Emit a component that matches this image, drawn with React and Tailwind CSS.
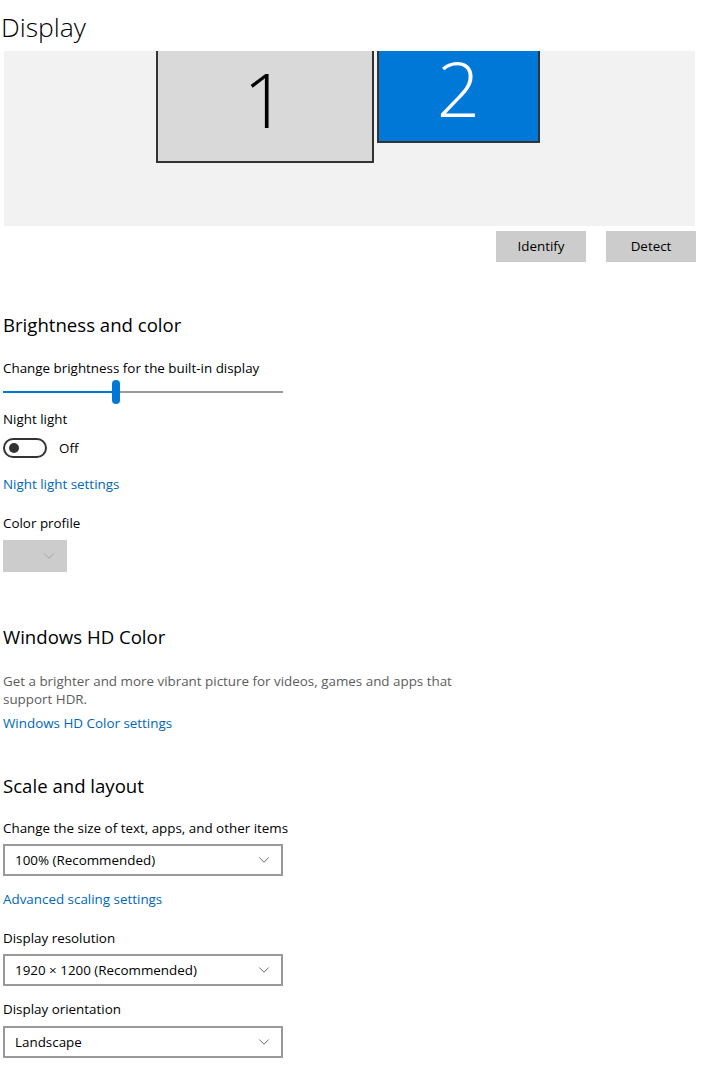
import { ChevronDown } from 'lucide-react';

const font = { fontFamily: '"Open Sans", "Noto Sans", sans-serif' };

const Link = ({ children }) => (
  <a className="block text-[13.4px] text-[#0067b8] leading-5 cursor-pointer">{children}</a>
);

const Select = ({ value }) => (
  <div className="w-[280px] h-8 border-2 border-[#999999] flex items-center justify-between pl-[10px] pr-[8px] text-[13.4px] text-black">
    <span>{value}</span>
    <ChevronDown size={18} strokeWidth={1} className="text-[#333]" />
  </div>
);

const Heading = ({ children, className = '' }) => (
  <h2 className={`text-[18.6px] leading-7 text-black ${className}`}>{children}</h2>
);

const Label = ({ children, className = '' }) => (
  <p className={`text-[13.4px] leading-5 text-black ${className}`}>{children}</p>
);

export default function App() {
  return (
    <div style={font} className="w-[703px] h-[1075px] bg-white overflow-hidden">
      <h1 className="text-[26.5px] font-light leading-9 pl-[1px] pt-[9px] text-black">Display</h1>

      {/* monitor arrangement canvas, monitors run off its top edge */}
      <div className="ml-1 mt-[6px] w-[691px] h-[175px] bg-[#f2f2f2] relative">
        <div className="absolute left-[152px] top-0 w-[218px] h-[112px] bg-[#d9d9d9] border-2 border-t-0 border-[#333] flex items-center justify-center">
          <span className="text-[76px] font-light leading-[80px] text-black -mt-[14px]">1</span>
        </div>
        <div className="absolute left-[373px] top-0 w-[163px] h-[92px] bg-[#0078d7] border-2 border-t-0 border-[#333] flex items-center justify-center">
          <span className="text-[76px] font-light leading-[80px] text-white -mt-[16px]">2</span>
        </div>
      </div>

      <div className="flex justify-end gap-5 mt-[5px] pr-[7px]">
        <button className="w-[90px] h-[31px] bg-[#cccccc] text-[13.4px] text-black">Identify</button>
        <button className="w-[90px] h-[31px] bg-[#cccccc] text-[13.4px] text-black">Detect</button>
      </div>

      <div className="pl-[3px]">
        <Heading className="mt-[49px]">Brightness and color</Heading>
        <Label className="mt-[19px]">Change brightness for the built-in display</Label>

        {/* brightness slider */}
        <div className="relative w-[280px] h-6 mt-[2px]">
          <div className="absolute left-0 right-0 top-[11px] h-[2px] bg-[#999]" />
          <div className="absolute left-0 w-[113px] top-[11px] h-[2px] bg-[#0078d7]" />
          <div className="absolute left-[109px] top-0 w-2 h-6 rounded-full bg-[#0078d7]" />
        </div>

        <Label className="mt-[5px]">Night light</Label>
        <div className="flex items-center gap-3 mt-[9px]">
          <div className="w-11 h-5 rounded-full border-2 border-[#333] flex items-center pl-[4px]">
            <div className="w-[10px] h-[10px] rounded-full bg-[#333]" />
          </div>
          <span className="text-[13.4px] text-black">Off</span>
        </div>

        <div className="mt-[16px]"><Link>Night light settings</Link></div>

        <Label className="mt-[19px]">Color profile</Label>
        <div className="mt-[7px] w-16 h-8 bg-[#cccccc] flex items-center justify-end pr-[9px]">
          <ChevronDown size={18} strokeWidth={1} className="text-[#999]" />
        </div>

        <Heading className="mt-[51px]">Windows HD Color</Heading>
        <p className="mt-[21px] w-[460px] text-[13.4px] leading-[18px] text-[#5d5d5d]">
          Get a brighter and more vibrant picture for videos, games and apps that support HDR.
        </p>
        <div className="mt-[5px]"><Link>Windows HD Color settings</Link></div>

        <Heading className="mt-[39px]">Scale and layout</Heading>
        <Label className="mt-[18px]">Change the size of text, apps, and other items</Label>
        <div className="mt-[6px]"><Select value="100% (Recommended)" /></div>
        <div className="mt-[13px]"><Link>Advanced scaling settings</Link></div>
        <Label className="mt-[19px]">Display resolution</Label>
        <div className="mt-[6px]"><Select value="1920 × 1200 (Recommended)" /></div>
        <Label className="mt-[13px]">Display orientation</Label>
        <div className="mt-[7px]"><Select value="Landscape" /></div>
      </div>
    </div>
  );
}
